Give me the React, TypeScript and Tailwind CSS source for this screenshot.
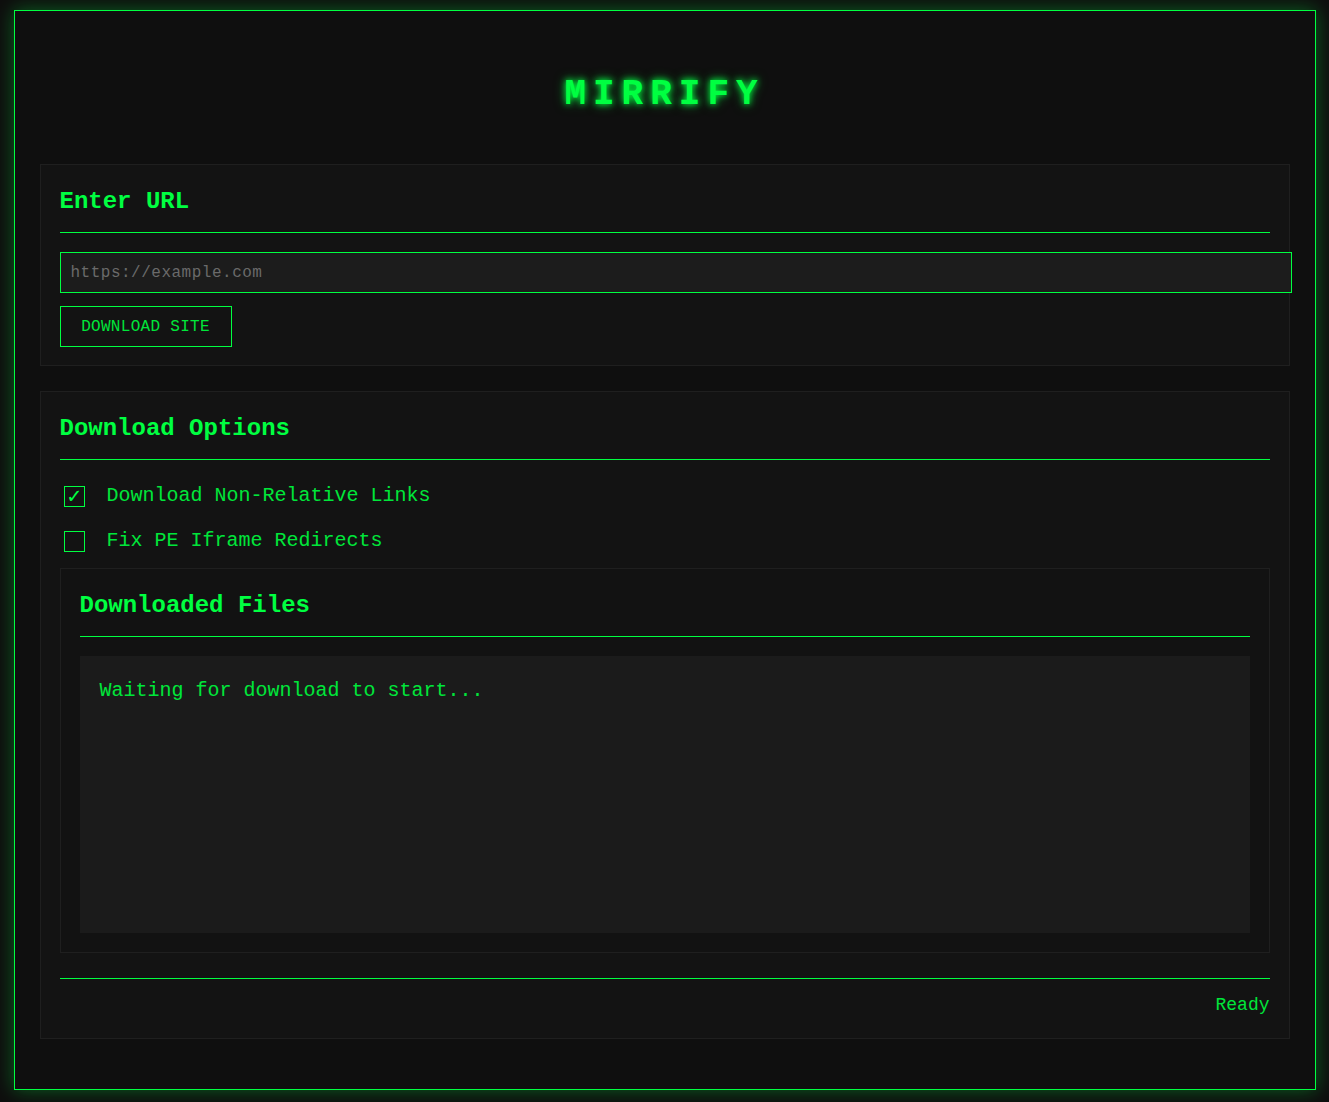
import { useState } from 'react';

const mono = { fontFamily: '"Courier New", Courier, "Liberation Mono", monospace' };

const SectionTitle = ({ children }: { children: string }) => (
  <h2 className="text-[24px] leading-[36px] font-bold text-[#00ff41] pb-3 border-b border-[#00ff41] mb-[19px]">
    {children}
  </h2>
);

const Option = ({ label, checked, onToggle }: { label: string; checked: boolean; onToggle: () => void }) => (
  <label className="flex items-center h-[30px] cursor-pointer" onClick={onToggle}>
    <span className="ml-1 w-[21px] h-[21px] border border-[#00ff41] flex items-center justify-center text-[#00ff41] text-[22px] leading-none pt-[4px]">
      {checked ? '✓' : ''}
    </span>
    <span className="ml-[22px] text-[20px] text-[#00e63a]">{label}</span>
  </label>
);

export default function App() {
  const [opts, setOpts] = useState({ nonRelative: true, fixIframe: false });

  return (
    <div className="min-h-screen bg-[#0e0e0e] pt-[10px] pb-[10px]" style={mono}>
      <div className="max-w-[1302px] mx-auto border border-[#00ff41] bg-[#0f0f0f] p-[25px] shadow-[0_0_18px_rgba(0,255,65,0.35)]">
        <h1
          className="mt-[35px] mb-[45px] text-center text-[36px] leading-[48px] font-bold tracking-[7px] text-[#00ff41]"
          style={{ textShadow: '0 0 6px #00ff41, 0 0 12px rgba(0,255,65,0.6)' }}
        >
          MIRRIFY
        </h1>

        {/* URL input */}
        <section className="bg-[#131313] border border-[#1f1f1f] px-[19px] pt-[19px] pb-[18px] mb-[25px]">
          <SectionTitle>Enter URL</SectionTitle>
          <input
            type="text"
            placeholder="https://example.com"
            className="box-content block w-full h-[39px] px-[10px] bg-[#1c1c1c] border border-[#00ff41] text-[16px] tracking-[0.5px] text-[#00ff41] placeholder:text-[#6a6a6a] outline-none"
          />
          <button className="mt-[13px] w-[172px] h-[41px] border border-[#00ff41] bg-transparent text-[16px] tracking-[0.3px] text-[#00e63a]">
            DOWNLOAD SITE
          </button>
        </section>

        {/* Options + files */}
        <section className="bg-[#131313] border border-[#1f1f1f] p-[19px] mb-[25px]">
          <SectionTitle>Download Options</SectionTitle>
          <div className="flex flex-col gap-[15px] pt-[2px]">
            <Option
              label="Download Non-Relative Links"
              checked={opts.nonRelative}
              onToggle={() => setOpts({ ...opts, nonRelative: !opts.nonRelative })}
            />
            <Option
              label="Fix PE Iframe Redirects"
              checked={opts.fixIframe}
              onToggle={() => setOpts({ ...opts, fixIframe: !opts.fixIframe })}
            />
          </div>

          <div className="mt-[12px] bg-[#121212] border border-[#1f1f1f] p-[19px]">
            <SectionTitle>Downloaded Files</SectionTitle>
            <div className="h-[277px] bg-[#1b1b1b] px-5 py-5 text-[20px] leading-[30px] text-[#00e63a]">
              Waiting for download to start...
            </div>
          </div>

          <div className="mt-[25px] border-t border-[#00ff41] pt-[12px] text-right text-[18px] leading-[28px] text-[#00e63a]">
            Ready
          </div>
        </section>
      </div>
    </div>
  );
}
